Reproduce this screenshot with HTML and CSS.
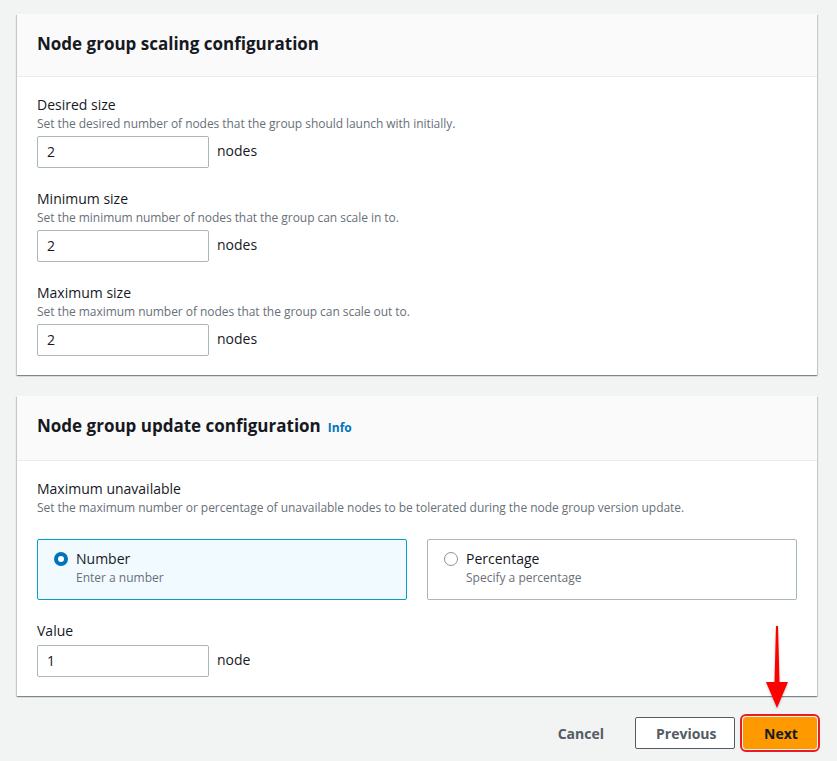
FILE: index.html
```html
<!DOCTYPE html>
<html>
<head>
<meta charset="utf-8">
<link rel="stylesheet" href="styles.css">
</head>
<body>
<div class="page">
  <section class="card">
    <div class="card-header"><h2>Node group scaling configuration</h2></div>
    <div class="card-body">
      <div class="field">
        <div class="label">Desired size</div>
        <div class="desc">Set the desired number of nodes that the group should launch with initially.</div>
        <div class="input-row"><div class="input">2</div><span class="unit">nodes</span></div>
      </div>
      <div class="field">
        <div class="label">Minimum size</div>
        <div class="desc">Set the minimum number of nodes that the group can scale in to.</div>
        <div class="input-row"><div class="input">2</div><span class="unit">nodes</span></div>
      </div>
      <div class="field">
        <div class="label">Maximum size</div>
        <div class="desc">Set the maximum number of nodes that the group can scale out to.</div>
        <div class="input-row"><div class="input">2</div><span class="unit">nodes</span></div>
      </div>
    </div>
  </section>

  <section class="card">
    <div class="card-header"><h2>Node group update configuration <a class="info">Info</a></h2></div>
    <div class="card-body">
      <div class="field">
        <div class="label">Maximum unavailable</div>
        <div class="desc">Set the maximum number or percentage of unavailable nodes to be tolerated during the node group version update.</div>
        <div class="tiles">
          <div class="tile selected">
            <span class="radio checked"></span>
            <div><div class="tile-title">Number</div><div class="tile-desc">Enter a number</div></div>
          </div>
          <div class="tile">
            <span class="radio"></span>
            <div><div class="tile-title">Percentage</div><div class="tile-desc">Specify a percentage</div></div>
          </div>
        </div>
      </div>
      <div class="field">
        <div class="label">Value</div>
        <div class="input-row"><div class="input">1</div><span class="unit">node</span></div>
      </div>
    </div>
  </section>

  <div class="actions">
    <button class="btn btn-link">Cancel</button>
    <button class="btn btn-normal">Previous</button>
    <button class="btn btn-primary">Next</button>
    <svg class="arrow" width="30" height="90" viewBox="0 0 30 90">
      <path d="M14 2 L16 2 L17.5 58 L26 58 L15 84 L4 58 L12.5 58 Z" fill="#ff0000"/>
    </svg>
  </div>
</div>
</body>
</html>
```
FILE: styles.css
```css
* { box-sizing: border-box; }
html, body { margin: 0; padding: 0; }
body {
  background: #f2f3f3;
  font-family: "Open Sans", "Noto Sans", sans-serif;
  color: #16191f;
  width: 837px;
  height: 761px;
  overflow: hidden;
}
.page {
  padding: 14px 20px 0 17px;
  display: flex;
  flex-direction: column;
  gap: 21px;
}
.card {
  width: 800px;
  background: #fff;
  box-shadow: 0 1px 1px 0 rgba(0,28,36,.3), 1px 1px 1px 0 rgba(0,28,36,.15), -1px 1px 1px 0 rgba(0,28,36,.15);
}
.card-header {
  background: #fafafa;
  border-bottom: 1px solid #eaeded;
  padding: 19px 20px 21px;
}
.card-header h2 {
  margin: 0;
  font-size: 17px;
  line-height: 22px;
  font-weight: 700;
  display: flex;
  align-items: baseline;
  gap: 7px;
}
.info {
  font-size: 12px;
  font-weight: 700;
  color: #0073bb;
}
.card-body {
  padding: 18px 20px 19px;
  display: flex;
  flex-direction: column;
  gap: 21px;
}
.label {
  font-size: 14px;
  line-height: 20px;
}
.desc {
  font-size: 12px;
  line-height: 16px;
  color: #687078;
  margin-top: 1px;
  letter-spacing: -0.05px;
}
.input-row {
  display: flex;
  align-items: center;
  gap: 8px;
  margin-top: 4px;
}
.input {
  width: 172px;
  height: 32px;
  border: 1px solid #aab7b8;
  border-radius: 2px;
  padding: 0 9px;
  font-size: 14px;
  line-height: 30px;
}
.unit {
  font-size: 14px;
  line-height: 20px;
  margin-top: -2px;
}
.tiles {
  display: flex;
  gap: 20px;
  margin-top: 23px;
}
.tile {
  flex: 1;
  height: 61px;
  border: 1px solid #aab7b8;
  border-radius: 2px;
  padding: 9px 16px 13px;
  display: flex;
  align-items: flex-start;
  gap: 8px;
}
.tile.selected {
  background: #f1faff;
  border-color: #00a1c9;
}
.radio {
  width: 14px;
  height: 14px;
  border-radius: 50%;
  border: 1.5px solid #879596;
  background: #fff;
  margin-top: 3px;
  flex: none;
}
.radio.checked {
  border: 4px solid #0073bb;
}
.tile-title {
  font-size: 14px;
  line-height: 20px;
}
.tile-desc {
  font-size: 12px;
  line-height: 16px;
  color: #687078;
  margin-top: 1px;
}
.actions {
  position: relative;
  width: 800px;
  display: flex;
  justify-content: flex-end;
  align-items: center;
  gap: 8px;
  margin-top: 0;
}
.btn {
  font-family: inherit;
  font-size: 14px;
  font-weight: 700;
  height: 32px;
  padding: 0 20px;
  border-radius: 2px;
  color: #545b64;
  background: transparent;
  border: 1px solid transparent;
}
.btn-link { margin-right: 2px; }
.btn-normal {
  width: 100px;
  background: #fff;
  border-color: #545b64;
}
.btn-primary {
  width: 74px;
  background: #ff9900;
  border-color: #ff9900;
  color: #16191f;
  outline: 2px solid #ea1c24;
  outline-offset: 1px;
  border-radius: 3px;
}
.arrow {
  position: absolute;
  right: 25px;
  top: -93px;
  filter: drop-shadow(0 1px 1px rgba(0,0,0,.25));
}
```
